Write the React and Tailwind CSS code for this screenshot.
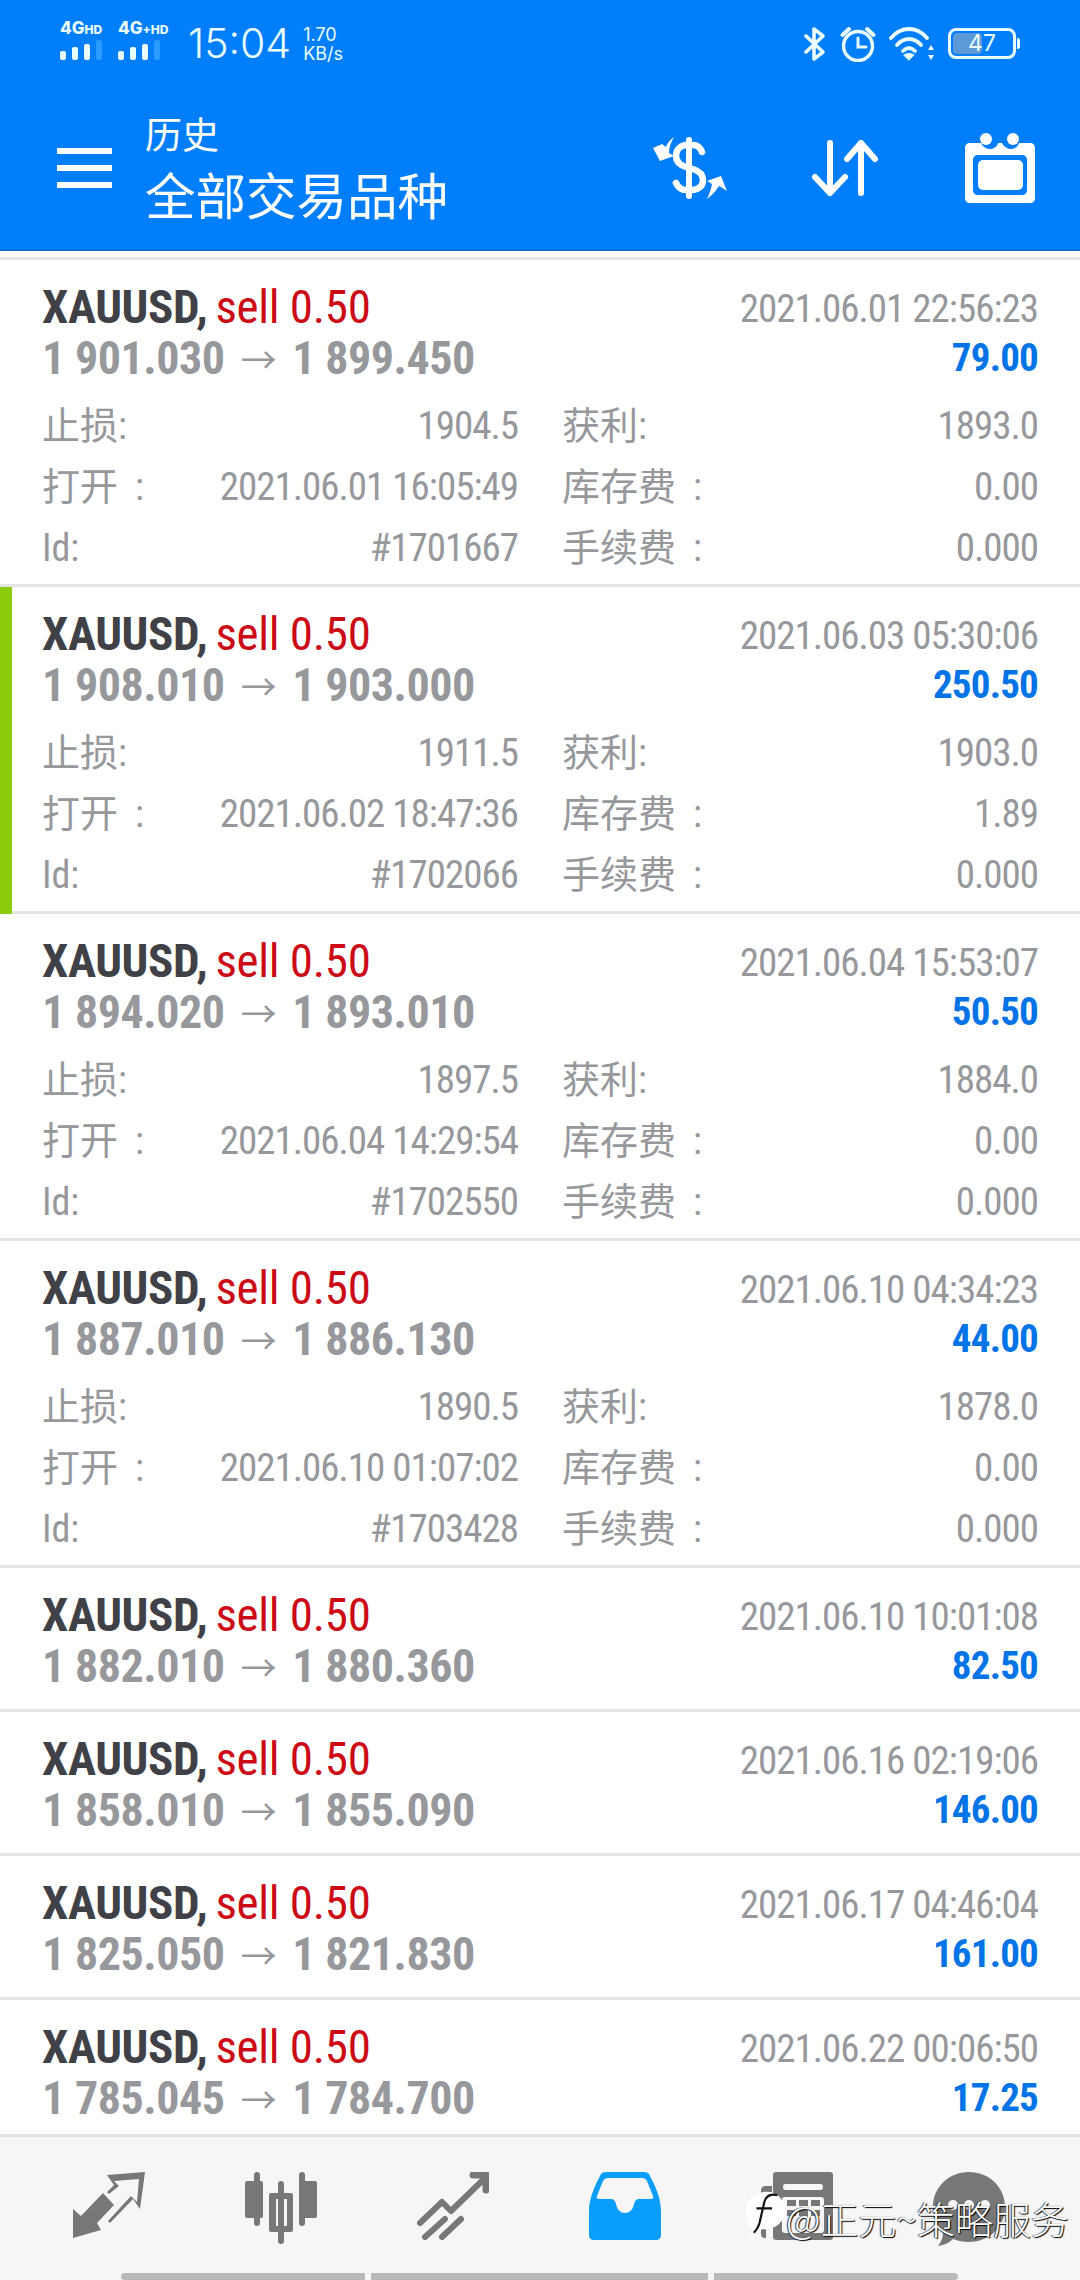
import React from 'react';

const num = '[font-family:"Roboto_Condensed","Liberation_Sans_Narrow",Roboto,"Noto_Sans_CJK_SC",sans-serif] [font-stretch:75%]';

const trades = [
  { open: '1 901.030', close: '1 899.450', time: '2021.06.01 22:56:23', profit: '79.00', sl: '1904.5', tp: '1893.0', opened: '2021.06.01 16:05:49', swap: '0.00', id: '#1701667' },
  { open: '1 908.010', close: '1 903.000', time: '2021.06.03 05:30:06', profit: '250.50', sl: '1911.5', tp: '1903.0', opened: '2021.06.02 18:47:36', swap: '1.89', id: '#1702066', active: true },
  { open: '1 894.020', close: '1 893.010', time: '2021.06.04 15:53:07', profit: '50.50', sl: '1897.5', tp: '1884.0', opened: '2021.06.04 14:29:54', swap: '0.00', id: '#1702550' },
  { open: '1 887.010', close: '1 886.130', time: '2021.06.10 04:34:23', profit: '44.00', sl: '1890.5', tp: '1878.0', opened: '2021.06.10 01:07:02', swap: '0.00', id: '#1703428' },
  { open: '1 882.010', close: '1 880.360', time: '2021.06.10 10:01:08', profit: '82.50' },
  { open: '1 858.010', close: '1 855.090', time: '2021.06.16 02:19:06', profit: '146.00' },
  { open: '1 825.050', close: '1 821.830', time: '2021.06.17 04:46:04', profit: '161.00' },
  { open: '1 785.045', close: '1 784.700', time: '2021.06.22 00:06:50', profit: '17.25' },
];

const Detail = ({ label, value }) => (
  <div className="flex h-[61px] items-center justify-between">
    <span>{label}</span>
    <span className="text-[39px] tracking-[-1px]">{value}</span>
  </div>
);

const TradeRow = ({ t }) => (
  <div className={`relative shrink-0 border-b-[3px] border-[#e4e4e4] pl-[42px] pr-[42px] pt-[22px] ${num} ${t.sl ? 'h-[327px]' : 'h-[144px]'}`}>
    {t.active && <div className="absolute -bottom-[3px] left-0 top-0 w-[12px] bg-[#8ccb0a]" />}
    <div className="flex h-[50px] items-center justify-between">
      <span className="text-[47px] leading-[50px] font-bold tracking-[-0.4px] text-[#404147]">
        XAUUSD,<span className="ml-[8px] font-normal tracking-[-0.3px] text-[#cc0a16]">sell 0.50</span>
      </span>
      <span className="mt-[4px] text-[39px] tracking-[-1px] text-[#97989c]">{t.time}</span>
    </div>
    <div className="flex h-[52px] items-center justify-between">
      <span className="text-[46px] font-bold tracking-[-0.45px] text-[#97989c]">
        {t.open}
        <span className="mx-[16px] text-[36px] font-normal">→</span>
        {t.close}
      </span>
      <span className="text-[39px] font-bold tracking-[-0.8px] text-[#0073e6]">{t.profit}</span>
    </div>
    {t.sl && (
      <div className="mt-[12px] grid grid-cols-2 gap-x-[44px] text-[38px] text-[#97989c]">
        <div>
          <Detail label="止损:" value={t.sl} />
          <Detail label={'打开\u2002:'} value={t.opened} />
          <Detail label="Id:" value={t.id} />
        </div>
        <div>
          <Detail label="获利:" value={t.tp} />
          <Detail label={'库存费\u2002:'} value={t.swap} />
          <Detail label={'手续费\u2002:'} value="0.000" />
        </div>
      </div>
    )}
  </div>
);

const SignalBars = () => (
  <div className="mt-[2px] flex items-end gap-[6px]">
    <div className="h-[9px] w-[6px] rounded-[2px] bg-[#eaffff]" />
    <div className="h-[13px] w-[6px] rounded-[2px] bg-[#eaffff]" />
    <div className="h-[16px] w-[6px] rounded-[2px] bg-[#eaffff]" />
    <div className="h-[20px] w-[6px] rounded-[2px] bg-[#2b9bff]" />
  </div>
);

const StatusBar = () => (
  <div className="flex h-[87px] items-center justify-between pl-[60px] pr-[64px] text-[#eaffff] [font-family:Inter,sans-serif]">
    <div className="flex items-center">
      <div className="mb-[8px] mr-[12px] w-[46px] text-[17px] leading-[16px] font-extrabold whitespace-nowrap">
        4G<span className="text-[12px]">HD</span>
        <SignalBars />
      </div>
      <div className="mb-[8px] mr-[14px] w-[56px] text-[17px] leading-[16px] font-extrabold whitespace-nowrap">
        4G<span className="text-[12px]">+HD</span>
        <SignalBars />
      </div>
      <span className="mr-[12px] text-[41px] leading-none font-light">15:04</span>
      <div className="text-[18px] leading-[19px]">1.70<br />KB/s</div>
    </div>
    <div className="flex items-center gap-[13px]">
      <svg width="24" height="36" viewBox="0 0 24 36" fill="none" stroke="#eaffff" strokeWidth="3.6" strokeLinecap="round" strokeLinejoin="round">
        <path d="M3 10 20 26 11 33V3l9 7L3 26" />
      </svg>
      <svg width="36" height="36" viewBox="0 0 36 36" fill="none" stroke="#eaffff" strokeLinecap="round">
        <circle cx="18" cy="20" r="14.5" strokeWidth="3.4" />
        <path d="M18 12v9h8" strokeWidth="3" />
        <path d="M2.5 9 9 3M33.5 9 27 3" strokeWidth="4" />
      </svg>
      <svg width="46" height="36" viewBox="0 0 46 36" fill="none" stroke="#eaffff" strokeWidth="3.8" strokeLinecap="round">
        <path d="M2 12C12 0 28 0 38 12" />
        <path d="M8 19c7-8 17-8 24 0" />
        <path d="M14 25c4-4 8-4 12 0" />
        <path d="M15 29c3-2 7-2 10 0l-5 5z" fill="#eaffff" strokeWidth="1" />
        <path d="M42 19l3 5h-6zM42 34l3-5h-6z" fill="#eaffff" stroke="none" />
      </svg>
      <div className="relative flex h-[31px] w-[68px] items-center justify-center rounded-[8px] border-[3px] border-[#eaffff] text-[23px] leading-none">
        <div className="absolute bottom-[2px] left-[2px] top-[2px] w-[29px] rounded-[4px] bg-[#5b9ad6]" />
        <span className="relative">47</span>
        <div className="absolute -right-[7px] top-[7px] h-[11px] w-[3px] rounded-r-[2px] bg-[#eaffff]" />
      </div>
    </div>
  </div>
);

const ExchangeIcon = () => (
  <svg width="74" height="62" viewBox="0 0 74 62" fill="white">
    <rect x="33" y="0" width="6" height="62" rx="3" />
    <path d="M49 15c-2-5-5-7-9-7M32 8c-5 1-9 5-9 11 0 6 4 9 10 11M40 32c6 2 10 6 10 11 0 6-4 9-10 10M33 53c-5 0-8-3-10-7" fill="none" stroke="white" strokeWidth="6.5" strokeLinecap="round" />
    <path d="M21 0C17 3 14 6 13 10l-4-3L0 11l7 13 14-5-5-3c0-6 2-11 5-16zM54 62c5-4 9-8 12-13l2 1 6 4-6-15-14 5 5 3c-1 5-3 11-5 15z" />
  </svg>
);

const SortIcon = () => (
  <svg width="70" height="58" viewBox="0 0 70 58" fill="none" stroke="white" strokeWidth="6" strokeLinecap="round" strokeLinejoin="round">
    <path d="M19 4v50M4 38l15 16 15-16" />
    <path d="M50 54V4M36 20 50 4l14 16" />
  </svg>
);

const CalendarIcon = () => (
  <svg width="70" height="70" viewBox="0 0 70 70" fill="white">
    <path fillRule="evenodd" d="M5 10h11c2 4 6 6 9 6s7-2 8-6h4c2 4 6 6 9 6s7-2 8-6h11c3 0 5 2 5 5v50c0 3-2 5-5 5H5c-3 0-5-2-5-5V15c0-3 2-5 5-5zm8 12c-3 0-5 2-5 5v30c0 3 2 5 5 5h44c3 0 5-2 5-5V27c0-3-2-5-5-5z" />
    <circle cx="21" cy="6" r="6" />
    <circle cx="48" cy="6" r="6" />
    <rect x="13" y="27" width="45" height="30" rx="5" />
  </svg>
);

const TradeIcon = () => (
  <svg width="72" height="66" viewBox="0 0 72 66" fill="#777">
    <path d="M72 0 67 37 60 27 37 51 35 49 58 24 64 30 66 7 41 9 46 14 36 22 34 20 41 13 34 3z" />
    <path d="M30 21 41 33 24 51 28 58 0 66 0 37 8 44z" />
  </svg>
);

const CandleIcon = () => (
  <svg width="72" height="72" viewBox="0 0 72 72" fill="#777">
    <rect x="9" y="0" width="6" height="54" rx="3" />
    <rect x="0" y="9" width="18" height="37" rx="2" />
    <rect x="54" y="0" width="6" height="54" rx="3" />
    <rect x="54" y="9" width="18" height="37" rx="2" />
    <rect x="33" y="9" width="6" height="63" rx="3" />
    <path fillRule="evenodd" d="M26 21h20a2 2 0 0 1 2 2v35a2 2 0 0 1-2 2H26a2 2 0 0 1-2-2V23a2 2 0 0 1 2-2zm5 6v27h11V27z" />
  </svg>
);

const ChartIcon = () => (
  <svg width="72" height="68" viewBox="0 0 72 68" fill="none" stroke="#777" strokeWidth="6" strokeLinecap="round" strokeLinejoin="round">
    <path d="M3 51 25 30l9 9 34-33" />
    <path d="M56 3h13v15" strokeWidth="7" />
    <path d="M8 65 28 47M25 65l19-18" />
  </svg>
);

const HistoryIcon = () => (
  <svg width="72" height="68" viewBox="0 0 72 68">
    <path fillRule="evenodd" fill="#0a9efc" d="M17 0h38c3 0 5 1 6 4 7 13 11 24 11 36v23c0 3-2 5-5 5H5c-3 0-5-2-5-5V40C0 28 4 17 11 4c1-3 3-4 6-4zm2 6c-2 0-4 1-5 3L8 24c-1 2 0 3 2 3h12c3 0 4 2 5 5 1 6 5 9 9 9s8-3 9-9c1-3 2-5 5-5h12c2 0 3-1 2-3L58 9c-1-2-3-3-5-3z" />
  </svg>
);

const CalcIcon = () => (
  <svg width="72" height="68" viewBox="0 0 72 68" fill="#777">
    <path d="M12 14H5c-2 0-4 2-4 4v44c0 2 1 4 4 4h1V20h6z" transform="translate(-1 0)" />
    <path fillRule="evenodd" d="M15 0h54c2 0 3 1 3 3v62c0 2-1 3-3 3H15c-2 0-3-1-3-3V3c0-2 1-3 3-3zm9 12c-1 0-2 1-2 3s1 3 2 3h36c1 0 2-1 2-3s-1-3-2-3zm0 13c-2 0-3 1-3 3v30c0 2 1 3 3 3h36c2 0 3-1 3-3V28c0-2-1-3-3-3z" />
    <rect x="26" y="28" width="9" height="6" />
    <rect x="38" y="28" width="9" height="6" />
    <rect x="50" y="28" width="9" height="6" />
    <rect x="26" y="38" width="9" height="6" />
    <rect x="38" y="38" width="9" height="6" />
    <rect x="50" y="38" width="9" height="6" />
  </svg>
);

const ChatIcon = () => (
  <svg width="72" height="74" viewBox="0 0 72 74" fill="#777">
    <path d="M36 0c20 0 36 15 36 35S56 70 36 70c-6 0-11-1-16-3-4 4-9 6-15 7 3-4 5-8 5-13C4 54 0 45 0 35 0 15 16 0 36 0z" />
    <circle cx="20" cy="33" r="5" fill="#f6f6f6" />
    <circle cx="36" cy="33" r="5" fill="#f6f6f6" />
    <circle cx="52" cy="33" r="5" fill="#f6f6f6" />
  </svg>
);

const WeiboMark = () => (
  <svg width="40" height="58" viewBox="0 0 46 62">
    <path d="M23 2c12 0 22 9 22 21S35 45 23 45c-3 0-5 0-7 1-3 6-7 11-13 14 3-5 5-10 5-15C3 41 0 33 0 23 0 11 11 2 23 2z" fill="white" />
    <path d="M36 6c-8-2-13 1-15 8l-5 22c-1 5-3 9-7 13M12 21h18" fill="none" stroke="#111" strokeWidth="2.5" />
  </svg>
);

export default function App() {
  return (
    <div className="relative flex h-[2280px] w-[1080px] flex-col overflow-hidden bg-white">
      <header className="h-[251px] shrink-0 border-b-[2px] border-[#066fd8] bg-[#007efc]">
        <StatusBar />
        <div className="flex items-center pl-[57px] pr-[45px] pt-[21px] text-white">
          <div className="flex w-[55px] flex-col gap-[11px]">
            <div className="h-[6px] bg-white" />
            <div className="h-[6px] bg-white" />
            <div className="h-[6px] bg-white" />
          </div>
          <div className="ml-[33px] [font-family:'Noto_Sans_CJK_SC',sans-serif]">
            <div className="text-[37px] leading-[50px]">历史</div>
            <div className="text-[50.5px] leading-[70px]">全部交易品种</div>
          </div>
          <div className="ml-auto flex items-center gap-[84px]">
            <ExchangeIcon />
            <SortIcon />
            <CalendarIcon />
          </div>
        </div>
      </header>
      <main className="flex min-h-0 flex-1 flex-col overflow-hidden">
        <div className="mt-[6px] h-[3px] shrink-0 bg-[#e4e4e4]" />
        {trades.map((t) => <TradeRow key={t.id || t.time} t={t} />)}
      </main>
      <nav className="relative h-[146px] shrink-0 border-t-[3px] border-[#e4e4e4] bg-[#f6f6f6]">
        <div className="flex items-start gap-[100px] pl-[73px] pt-[35px]">
          <TradeIcon />
          <CandleIcon />
          <ChartIcon />
          <HistoryIcon />
          <CalcIcon />
          <ChatIcon />
        </div>
        <div className="absolute bottom-0 left-[121px] flex h-[7px] gap-[6px]">
          <div className="w-[244px] rounded-l-[4px] bg-[#b9b9b9]" />
          <div className="w-[337px] bg-[#b9b9b9]" />
          <div className="w-[244px] rounded-r-[4px] bg-[#b9b9b9]" />
        </div>
      </nav>
      <div className="absolute bottom-[34px] left-[746px] flex items-center text-[38px] font-light text-white [font-family:'Noto_Sans_CJK_SC',sans-serif] [text-shadow:1px_1px_1px_#000,-1px_0_1px_#333]">
        <WeiboMark />
        <span>@正元~策略服务</span>
      </div>
    </div>
  );
}
